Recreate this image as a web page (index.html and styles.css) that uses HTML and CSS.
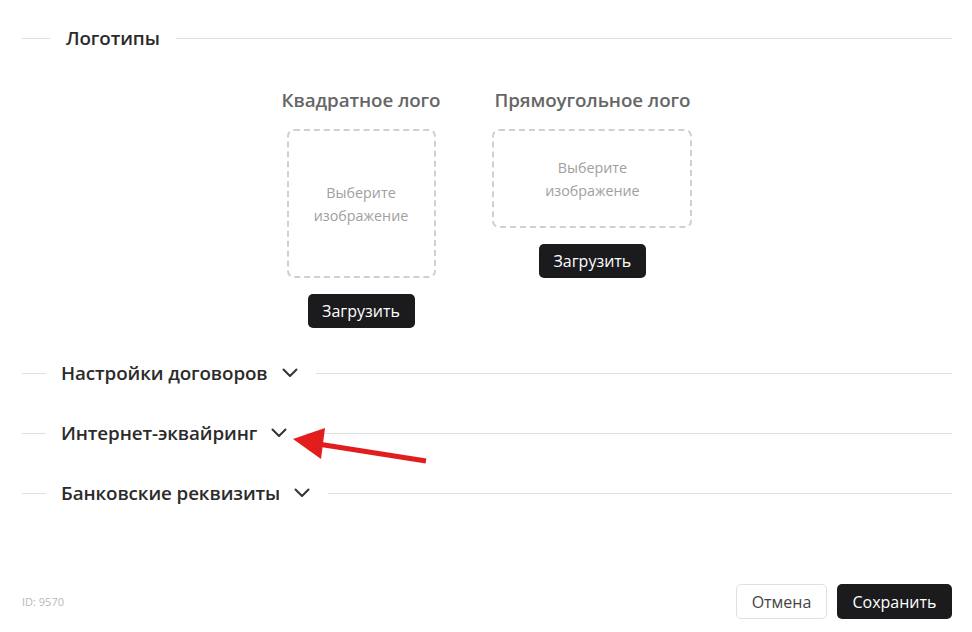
FILE: index.html
```html
<!DOCTYPE html>
<html lang="ru">
<head>
<meta charset="utf-8">
<link rel="stylesheet" href="styles.css">
</head>
<body>
<div class="page">
  <div class="divider first">
    <span class="line-left wide"></span>
    <span class="divider-title">Логотипы</span>
    <span class="line-right"></span>
  </div>

  <div class="logos">
    <div class="logo-col">
      <div class="logo-label">Квадратное лого</div>
      <div class="drop square">Выберите<br>изображение</div>
      <button class="btn dark upload">Загрузить</button>
    </div>
    <div class="logo-col">
      <div class="logo-label">Прямоугольное лого</div>
      <div class="drop rect">Выберите<br>изображение</div>
      <button class="btn dark upload">Загрузить</button>
    </div>
  </div>

  <div class="divider section">
    <span class="line-left"></span>
    <span class="divider-title">Настройки договоров</span>
    <svg class="chev" viewBox="0 0 16 10" width="16" height="10"><path d="M1.5 1.5L8 8l6.5-6.5" fill="none" stroke="#333" stroke-width="2" stroke-linecap="round" stroke-linejoin="round"/></svg>
    <span class="line-right"></span>
  </div>

  <div class="divider section">
    <span class="line-left"></span>
    <span class="divider-title">Интернет-эквайринг</span>
    <svg class="chev" viewBox="0 0 16 10" width="16" height="10"><path d="M1.5 1.5L8 8l6.5-6.5" fill="none" stroke="#333" stroke-width="2" stroke-linecap="round" stroke-linejoin="round"/></svg>
    <span class="line-right"></span>
  </div>

  <div class="divider section">
    <span class="line-left"></span>
    <span class="divider-title">Банковские реквизиты</span>
    <svg class="chev" viewBox="0 0 16 10" width="16" height="10"><path d="M1.5 1.5L8 8l6.5-6.5" fill="none" stroke="#333" stroke-width="2" stroke-linecap="round" stroke-linejoin="round"/></svg>
    <span class="line-right"></span>
  </div>

  <div class="footer">
    <span class="id">ID: 9570</span>
    <div class="actions">
      <button class="btn light">Отмена</button>
      <button class="btn dark save">Сохранить</button>
    </div>
  </div>

  <svg class="arrow" width="972" height="632" viewBox="0 0 972 632">
    <line x1="426" y1="461" x2="318" y2="444" stroke="#e21d1d" stroke-width="5"/>
    <polygon points="293,439 325,428 321,459" fill="#e21d1d"/>
  </svg>
</div>
</body>
</html>
```

FILE: styles.css
```css
* { box-sizing: border-box; }
html, body { margin: 0; padding: 0; background: #fff; }
body {
  font-family: "Segoe UI", "Open Sans", "Noto Sans", sans-serif;
  color: #333;
}
.page {
  position: relative;
  width: 972px;
  height: 632px;
  padding: 0 20px 0 22px;
  display: flex;
  flex-direction: column;
}
.divider {
  display: flex;
  align-items: center;
  height: 24px;
}
.divider.first { margin-top: 26px; }
.line-left {
  width: 24px;
  height: 1px;
  background: #e0e0e0;
  margin-right: 15px;
}
.line-left.wide { width: 28px; margin-right: 16px; }
.line-right {
  flex: 1;
  height: 1px;
  background: #e0e0e0;
  margin-left: 16px;
}
.chev + .line-right { margin-left: 18px; }
.divider-title {
  font-size: 18.8px;
  font-weight: 600;
  color: #2b2b2b;
  letter-spacing: -0.1px;
}
.chev { margin-left: 14px; }

.logos {
  display: flex;
  justify-content: center;
  align-items: flex-start;
  gap: 52px;
  margin-top: 38px;
}
.logo-col {
  display: flex;
  flex-direction: column;
  align-items: center;
}
.logo-label {
  font-size: 18.8px;
  font-weight: 600;
  color: #666;
  line-height: 24px;
  letter-spacing: -0.1px;
}
.drop {
  margin-top: 17px;
  border: 2px dashed #d0d0d0;
  border-radius: 7px;
  display: flex;
  align-items: center;
  justify-content: center;
  text-align: center;
  font-size: 14.3px;
  line-height: 23px;
  color: #a0a0a0;
}
.drop.square { width: 149px; height: 149px; }
.drop.rect { width: 200px; height: 99px; }
.btn {
  font-family: inherit;
  font-size: 16px;
  border-radius: 5px;
  cursor: pointer;
  height: 34px;
  padding: 0 14px;
}
.btn.dark {
  background: #1b1b1d;
  color: #fff;
  border: none;
}
.btn.light {
  background: #fff;
  color: #444;
  border: 1px solid #e0e0e0;
}
.upload { margin-top: 16px; width: 107px; padding: 0; }

.divider.section { margin-top: 36px; }
.logos + .divider.section { margin-top: 33px; }

.footer {
  margin-top: auto;
  margin-bottom: 13px;
  display: flex;
  justify-content: space-between;
  align-items: center;
}
.id { font-size: 11px; color: #b8b8b8; }
.actions { display: flex; gap: 10px; }
.actions .btn { height: 35px; }
.actions .light { width: 91px; padding: 0; }
.actions .save { width: 115px; padding: 0; }

.arrow {
  position: absolute;
  left: 0;
  top: 0;
  pointer-events: none;
}
```
